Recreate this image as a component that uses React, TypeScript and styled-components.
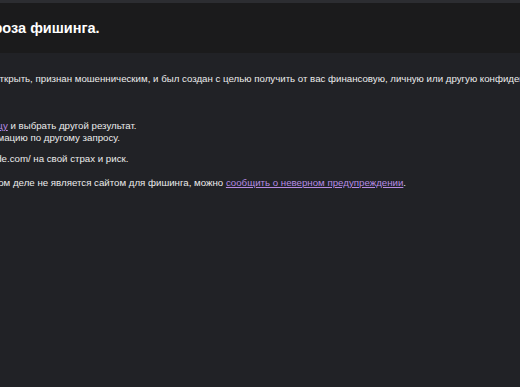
import styled, { createGlobalStyle } from "styled-components";

const GlobalStyle = createGlobalStyle`
  html, body {
    margin: 0;
    padding: 0;
    background: #212226;
    overflow: hidden;
  }
  body {
    font-family: "Liberation Sans", Arial, sans-serif;
  }
`;

const Viewport = styled.div`
  width: 520px;
  height: 387px;
  overflow: hidden;
  background: #212226;
`;

const TopStrip = styled.div`
  height: 3px;
  background: #2c2d31;
`;

const Header = styled.header`
  height: 50px;
  background: #1b1b1c;
  display: flex;
  align-items: center;
`;

const Title = styled.h1<{ $shift: number }>`
  margin: 0 0 0 ${(p) => -p.$shift}px;
  font-size: 14.5px;
  font-weight: 700;
  color: #ffffff;
  white-space: nowrap;
`;

const Content = styled.main<{ $shift: number }>`
  margin-left: ${(p) => -p.$shift}px;
  width: 1400px;
  padding-top: 20px;
  font-size: 9.7px;
  line-height: 12px;
  color: #ececec;
`;

const Para = styled.p<{ $gap?: number }>`
  margin: ${(p) => p.$gap ?? 0}px 0 0;
  white-space: nowrap;
`;

const List = styled.ul`
  list-style: none;
  margin: 35px 0 0;
  padding: 0;
`;

const Item = styled.li`
  white-space: nowrap;
`;

const Link = styled.a`
  color: #b68be4;
  text-decoration: underline;
`;

export default function App() {
  return (
    <Viewport>
      <GlobalStyle />
      <TopStrip />
      <Header>
        <Title $shift={21}>Угроза фишинга.</Title>
      </Header>
      <Content $shift={136}>
        <Para>
          Сайт, который вы пытаетесь открыть, признан мошенническим, и был создан с целью получить от вас
          финансовую, личную или другую конфиденциальную информацию.
        </Para>
        <List>
          <Item>
            Открыть <Link href="#">предыдущую страницу</Link> и выбрать другой результат.
          </Item>
          <Item>Или попытаться найти информацию по другому запросу.</Item>
        </List>
        <Para $gap={9}>Перейти на сайт https://zip-code.com/ на свой страх и риск.</Para>
        <Para $gap={12}>
          Если, по-вашему, сайт на самом деле не является сайтом для фишинга, можно{" "}
          <Link href="#">сообщить о неверном предупреждении</Link>.
        </Para>
      </Content>
    </Viewport>
  );
}
